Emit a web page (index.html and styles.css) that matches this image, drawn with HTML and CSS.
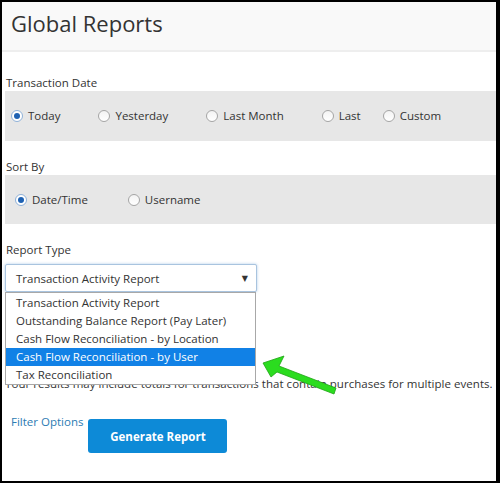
FILE: index.html
```html
<!DOCTYPE html>
<html>
	<head>
		<meta charset="UTF-8">
		<title>Global Reports</title>
		<link rel="stylesheet" href="styles.css">
	</head>
	<body>
		<div id="frame">
			<div class="head">
				<h1>Global Reports</h1>
			</div>
			<div class="content">
				<p class="label first">Transaction Date</p>
				<div class="band date-band">
					<label class="opt"><input type="radio" name="date" checked>Today</label>
					<label class="opt"><input type="radio" name="date">Yesterday</label>
					<label class="opt"><input type="radio" name="date">Last Month</label>
					<label class="opt opt-last"><input type="radio" name="date">Last</label>
					<label class="opt"><input type="radio" name="date">Custom</label>
				</div>

				<p class="label">Sort By</p>
				<div class="band sort-band">
					<label class="opt"><input type="radio" name="sort" checked>Date/Time</label>
					<label class="opt"><input type="radio" name="sort">Username</label>
				</div>

				<p class="label">Report Type</p>
				<div class="select-wrap">
					<div class="select">
						<span>Transaction Activity Report</span>
						<span class="caret">&#9660;</span>
					</div>
					<ul class="options">
						<li>Transaction Activity Report</li>
						<li>Outstanding Balance Report (Pay Later)</li>
						<li>Cash Flow Reconciliation - by Location</li>
						<li class="selected">Cash Flow Reconciliation - by User</li>
						<li>Tax Reconciliation</li>
					</ul>
				</div>

				<p class="note">Your results may include totals for transactions that contain purchases for multiple events.</p>

				<div class="actions">
					<a class="filter" href="#">Filter Options</a>
					<button class="btn" type="button">Generate Report</button>
				</div>
			</div>
			<!-- pointer drawn over the screenshot -->
			<svg class="pointer" width="90" height="50" viewBox="0 0 90 50">
				<polygon points="8,13 29,6 24,16 81,38 79,44 22,22 16,27" fill="#2bdc1f" stroke="#1ea314" stroke-width="0.8" stroke-linejoin="round"/>
			</svg>
		</div>
	</body>
</html>
```

FILE: styles.css
```css
*{
	margin:0;
	padding:0;
	box-sizing:border-box;
}
body{
	font-family:"Open Sans","DejaVu Sans",sans-serif;
	font-size:11.5px;
	color:#333;
	background:#fff;
}
#frame{
	position:relative;
	width:500px;
	height:483px;
	border-style:solid;
	border-color:#000;
	border-width:2px 4px 2px 2px;
	overflow:hidden;
}
.head{
	height:50px;
	background:#f9f9f9;
	border-bottom:2px solid #eeeeee;
	padding-left:9px;
}
.head h1{
	font-size:22px;
	font-weight:500;
	line-height:42px;
	color:#333;
}
.content{
	padding-left:3px;
}
.label{
	line-height:16px;
	padding-top:2px;
	padding-left:1px;
	margin-top:16px;
	color:#333;
}
.label.first{
	margin-top:21px;
}
.band{
	display:flex;
	align-items:center;
	background:#e7e7e7;
}
.date-band{
	height:50px;
	padding-left:6px;
}
.sort-band{
	height:49px;
	padding-left:10px;
	padding-top:1px;
}
.opt{
	display:flex;
	align-items:center;
	margin-right:38px;
	line-height:16px;
	color:#333;
}
.opt-last{
	margin-right:22px;
}
.sort-band .opt{
	margin-right:40px;
}
.opt input{
	appearance:none;
	-webkit-appearance:none;
	width:12px;
	height:12px;
	border:1px solid #a5a5a5;
	border-radius:50%;
	background:linear-gradient(#f3f3f3,#fff);
	margin-right:5px;
	position:relative;
}
.opt input:checked{
	border-color:#8fb1d8;
	background:#fff;
}
.opt input:checked::after{
	content:"";
	position:absolute;
	left:2px;
	top:2px;
	width:6px;
	height:6px;
	border-radius:50%;
	background:#1f62b3;
}
.select-wrap{
	position:relative;
	width:252px;
	margin-top:6px;
}
.select{
	display:flex;
	justify-content:space-between;
	align-items:center;
	height:28px;
	padding:0 8px 0 10px;
	border:1px solid #a9c4df;
	border-radius:2px;
	box-shadow:0 0 3px rgba(110,160,215,0.55);
	background:#fff;
}
.caret{
	font-size:8px;
	color:#333;
	margin-top:-2px;
}
.options{
	position:absolute;
	left:0;
	top:100%;
	width:251px;
	list-style:none;
	background:#fff;
	border:1px solid #a8a8a8;
	padding-top:1px;
	z-index:2;
}
.options li{
	line-height:18px;
	padding-left:10px;
	color:#333;
	white-space:nowrap;
}
.options .selected{
	background:#1181e6;
	color:#fff;
}
.note{
	margin-top:83px;
	line-height:18px;
	letter-spacing:0.03px;
	white-space:nowrap;
	color:#333;
}
.actions{
	display:flex;
	align-items:flex-start;
	margin-top:20px;
	padding-left:6px;
}
.filter{
	line-height:18px;
	color:#2c7cb3;
	text-decoration:none;
	margin-right:5px;
}
.btn{
	margin-top:6px;
	width:139px;
	height:34px;
	border:none;
	border-radius:3px;
	background:#0d8ad7;
	color:#fff;
	font-family:"Open Sans","DejaVu Sans",sans-serif;
	font-size:11.5px;
	font-weight:700;
}
.pointer{
	position:absolute;
	left:253px;
	top:348px;
	z-index:3;
}
```
